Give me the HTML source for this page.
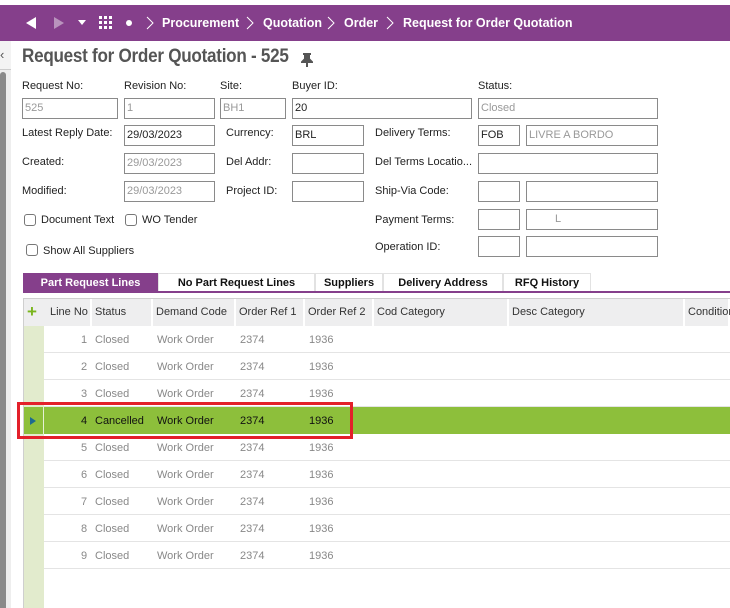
<!DOCTYPE html>
<html><head><style>
*{margin:0;padding:0;box-sizing:border-box}
html,body{width:730px;height:608px;overflow:hidden}
body{background:#fff;font-family:"Liberation Sans",Arial,sans-serif;font-size:11px;color:#222;position:relative}
.a{position:absolute;white-space:nowrap}
.hdr{left:0;top:5px;width:730px;height:36px;background:#853f8b}
.hdr .t{color:#fff;font-weight:bold;font-size:12.5px;top:11px}
.lbl{font-size:11px;color:#222}
.in{border:1px solid #8a8a8a;height:21px;background:#fff;font-size:11px;padding:3px 0 0 2px;color:#222}
.ro{color:#999}
.cb{width:12px;height:12px;border:1px solid #777;border-radius:3px;background:#fff}
.tab{top:273px;height:19px;font-weight:bold;font-size:11px;text-align:center;padding-top:3px;border:1px solid #e2e2e2;border-bottom:none;background:#fff;color:#111}
.gh{top:299px;height:27px;background:#eeeeef;font-size:11px;color:#333;padding:7px 0 0 3px;border-right:2px solid #fff}
.row{left:44px;width:686px;height:27px;border-bottom:1px solid #e4e4e4}
.c{font-size:11px;color:#888;top:8px}
</style></head><body>
<div class="a hdr">
 <svg class="a" style="left:24px;top:11px" width="14" height="14"><path d="M12 1L2 7L12 13Z" fill="#fff"/></svg>
 <svg class="a" style="left:52px;top:11px" width="14" height="14"><path d="M2 1L12 7L2 13Z" fill="#b993bd"/></svg>
 <svg class="a" style="left:78px;top:15px" width="8" height="6"><path d="M0 0L8 0L4 5Z" fill="#fff"/></svg>
 <svg class="a" style="left:99px;top:11px" width="14" height="14" fill="#fff"><rect x="0" y="0" width="3" height="3"/><rect x="5" y="0" width="3" height="3"/><rect x="10" y="0" width="3" height="3"/><rect x="0" y="5" width="3" height="3"/><rect x="5" y="5" width="3" height="3"/><rect x="10" y="5" width="3" height="3"/><rect x="0" y="10" width="3" height="3"/><rect x="5" y="10" width="3" height="3"/><rect x="10" y="10" width="3" height="3"/></svg>
 <div class="a" style="left:126px;top:15px;width:6px;height:6px;border-radius:3px;background:#fff"></div>
 <svg class="a" style="left:146px;top:11px" width="8" height="14"><path d="M1 1L7 7L1 13" stroke="#fff" fill="none"/></svg>
 <div class="a t" style="left:162px">Procurement</div>
 <svg class="a" style="left:246px;top:11px" width="8" height="14"><path d="M1 1L7 7L1 13" stroke="#fff" fill="none"/></svg>
 <div class="a t" style="left:263px">Quotation</div>
 <svg class="a" style="left:327px;top:11px" width="8" height="14"><path d="M1 1L7 7L1 13" stroke="#fff" fill="none"/></svg>
 <div class="a t" style="left:344px">Order</div>
 <svg class="a" style="left:386px;top:11px" width="8" height="14"><path d="M1 1L7 7L1 13" stroke="#fff" fill="none"/></svg>
 <div class="a t" style="left:403px">Request for Order Quotation</div>
</div>
<div class="a" style="left:0;top:41px;width:11px;height:567px;background:#eeeeee"></div>
<div class="a" style="left:0;top:41px;width:11px;height:29px;background:#f3f3f3;border-bottom:1px solid #ccc"></div>
<div class="a" style="left:0;top:47px;font-size:13px;color:#555">&lsaquo;</div>
<div class="a" style="left:0;top:72px;width:6px;height:536px;background:#8a8a8a;border-radius:3px 3px 0 0"></div>
<div class="a" style="left:22px;top:46px;font-size:19px;font-weight:bold;color:#555;letter-spacing:-0.3px;transform:scaleX(0.9);transform-origin:left">Request for Order Quotation - 525</div>
<svg class="a" style="left:301px;top:53px" width="12" height="14"><path d="M2 1H10M4 1V6L1 9H11L8 6V1M6 9V14" stroke="#555" stroke-width="2" fill="#555"/></svg>

<div class="a lbl" style="left:22px;top:80px">Request No:</div>
<div class="a lbl" style="left:124px;top:80px">Revision No:</div>
<div class="a lbl" style="left:220px;top:80px">Site:</div>
<div class="a lbl" style="left:292px;top:80px">Buyer ID:</div>
<div class="a lbl" style="left:478px;top:80px">Status:</div>
<div class="a in ro" style="left:22px;top:98px;width:96px">525</div>
<div class="a in ro" style="left:124px;top:98px;width:91px">1</div>
<div class="a in ro" style="left:220px;top:98px;width:66px">BH1</div>
<div class="a in" style="left:292px;top:98px;width:180px">20</div>
<div class="a in ro" style="left:478px;top:98px;width:180px">Closed</div>

<div class="a lbl" style="left:22px;top:127px">Latest Reply Date:</div>
<div class="a in" style="left:124px;top:125px;width:91px">29/03/2023</div>
<div class="a lbl" style="left:226px;top:127px">Currency:</div>
<div class="a in" style="left:292px;top:125px;width:72px">BRL</div>
<div class="a lbl" style="left:375px;top:127px">Delivery Terms:</div>
<div class="a in" style="left:478px;top:125px;width:42px">FOB</div>
<div class="a in ro" style="left:526px;top:125px;width:132px">LIVRE A BORDO</div>

<div class="a lbl" style="left:22px;top:156px">Created:</div>
<div class="a in ro" style="left:124px;top:153px;width:91px">29/03/2023</div>
<div class="a lbl" style="left:226px;top:156px">Del Addr:</div>
<div class="a in" style="left:292px;top:153px;width:72px"></div>
<div class="a lbl" style="left:375px;top:156px">Del Terms Locatio...</div>
<div class="a in" style="left:478px;top:153px;width:180px"></div>

<div class="a lbl" style="left:22px;top:185px">Modified:</div>
<div class="a in ro" style="left:124px;top:181px;width:91px">29/03/2023</div>
<div class="a lbl" style="left:226px;top:185px">Project ID:</div>
<div class="a in" style="left:292px;top:181px;width:72px"></div>
<div class="a lbl" style="left:375px;top:185px">Ship-Via Code:</div>
<div class="a in" style="left:478px;top:181px;width:42px"></div>
<div class="a in" style="left:526px;top:181px;width:132px"></div>

<div class="a cb" style="left:24px;top:214px"></div>
<div class="a lbl" style="left:41px;top:214px">Document Text</div>
<div class="a cb" style="left:125px;top:214px"></div>
<div class="a lbl" style="left:142px;top:214px">WO Tender</div>
<div class="a lbl" style="left:375px;top:214px">Payment Terms:</div>
<div class="a in" style="left:478px;top:209px;width:42px"></div>
<div class="a in ro" style="left:526px;top:209px;width:132px;padding-left:28px">L</div>

<div class="a cb" style="left:26px;top:244px"></div>
<div class="a lbl" style="left:43px;top:245px">Show All Suppliers</div>
<div class="a lbl" style="left:375px;top:241px">Operation ID:</div>
<div class="a in" style="left:478px;top:236px;width:42px"></div>
<div class="a in ro" style="left:526px;top:236px;width:132px"></div>

<div class="a tab" style="left:23px;width:135px;background:#853f8b;color:#fff;border-color:#853f8b">Part Request Lines</div>
<div class="a tab" style="left:158px;width:157px">No Part Request Lines</div>
<div class="a tab" style="left:315px;width:68px">Suppliers</div>
<div class="a tab" style="left:383px;width:120px">Delivery Address</div>
<div class="a tab" style="left:503px;width:88px">RFQ History</div>
<div class="a" style="left:23px;top:291px;width:707px;height:2px;background:#853f8b"></div>

<div class="a" style="left:23px;top:298px;width:707px;height:310px;border:1px solid #cfcfcf;border-right:none;border-bottom:none"></div>
<div class="a" style="left:24px;top:299px;width:20px;height:309px;background:#e2ebcd"></div>
<div class="a" style="left:24px;top:299px;width:706px;height:27px;background:#eeeeef"></div>
<div class="a" style="left:27px;top:302px;color:#7ab51d;font-size:17px;font-weight:bold">+</div>
<div class="a gh" style="left:44px;width:48px;padding-left:6px">Line No</div>
<div class="a gh" style="left:92px;width:61px">Status</div>
<div class="a gh" style="left:153px;width:83px">Demand Code</div>
<div class="a gh" style="left:236px;width:69px">Order Ref 1</div>
<div class="a gh" style="left:305px;width:69px">Order Ref 2</div>
<div class="a gh" style="left:374px;width:135px">Cod Category</div>
<div class="a gh" style="left:509px;width:176px">Desc Category</div>
<div class="a gh" style="left:685px;width:45px">Condition</div>

<div class="a row" style="top:326px"><div class="a c" style="left:37px">1</div><div class="a c" style="left:51px">Closed</div><div class="a c" style="left:113px">Work Order</div><div class="a c" style="left:196px">2374</div><div class="a c" style="left:265px">1936</div></div>
<div class="a row" style="top:353px"><div class="a c" style="left:37px">2</div><div class="a c" style="left:51px">Closed</div><div class="a c" style="left:113px">Work Order</div><div class="a c" style="left:196px">2374</div><div class="a c" style="left:265px">1936</div></div>
<div class="a row" style="top:380px"><div class="a c" style="left:37px">3</div><div class="a c" style="left:51px">Closed</div><div class="a c" style="left:113px">Work Order</div><div class="a c" style="left:196px">2374</div><div class="a c" style="left:265px">1936</div></div>
<div class="a" style="left:24px;top:407px;width:706px;height:27px;background:#8dbf3b"></div>
<div class="a" style="left:43px;top:407px;width:1px;height:27px;background:#e6f0d6"></div>
<svg class="a" style="left:30px;top:417px" width="7" height="8"><path d="M0 0L6 4L0 8Z" fill="#1d6a8f"/></svg>
<div class="a row" style="top:407px;border:none"><div class="a c" style="left:37px;color:#111">4</div><div class="a c" style="left:51px;color:#111">Cancelled</div><div class="a c" style="left:113px;color:#111">Work Order</div><div class="a c" style="left:196px;color:#111">2374</div><div class="a c" style="left:265px;color:#111">1936</div></div>
<div class="a row" style="top:434px"><div class="a c" style="left:37px">5</div><div class="a c" style="left:51px">Closed</div><div class="a c" style="left:113px">Work Order</div><div class="a c" style="left:196px">2374</div><div class="a c" style="left:265px">1936</div></div>
<div class="a row" style="top:461px"><div class="a c" style="left:37px">6</div><div class="a c" style="left:51px">Closed</div><div class="a c" style="left:113px">Work Order</div><div class="a c" style="left:196px">2374</div><div class="a c" style="left:265px">1936</div></div>
<div class="a row" style="top:488px"><div class="a c" style="left:37px">7</div><div class="a c" style="left:51px">Closed</div><div class="a c" style="left:113px">Work Order</div><div class="a c" style="left:196px">2374</div><div class="a c" style="left:265px">1936</div></div>
<div class="a row" style="top:515px"><div class="a c" style="left:37px">8</div><div class="a c" style="left:51px">Closed</div><div class="a c" style="left:113px">Work Order</div><div class="a c" style="left:196px">2374</div><div class="a c" style="left:265px">1936</div></div>
<div class="a row" style="top:542px"><div class="a c" style="left:37px">9</div><div class="a c" style="left:51px">Closed</div><div class="a c" style="left:113px">Work Order</div><div class="a c" style="left:196px">2374</div><div class="a c" style="left:265px">1936</div></div>

<div class="a" style="left:17px;top:402px;width:336px;height:37px;border:3px solid #e3202a"></div>
</body></html>
